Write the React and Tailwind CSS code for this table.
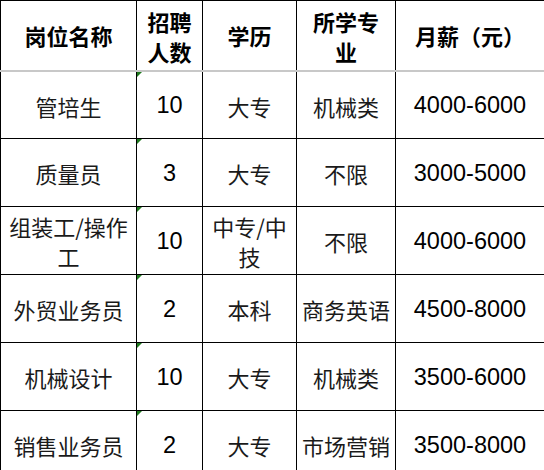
import React from 'react';

const cols = ['w-[136px]', 'w-[66px]', 'w-[94px]', 'w-[99px]', 'flex-1'];

const rows = [
  ['管培生', '10', '大专', '机械类', '4000-6000'],
  ['质量员', '3', '大专', '不限', '3000-5000'],
  [['组装工/操作', '工'], '10', ['中专/中', '技'], '不限', '4000-6000'],
  ['外贸业务员', '2', '本科', '商务英语', '4500-8000'],
  ['机械设计', '10', '大专', '机械类', '3500-6000'],
  ['销售业务员', '2', '大专', '市场营销', '3500-8000'],
];

const cjk = "font-['Noto_Sans_CJK_SC',sans-serif]";
const num = "font-['Liberation_Sans','Noto_Sans_CJK_SC',sans-serif]";

const Text = ({ value }) =>
  Array.isArray(value) ? (
    <span className="leading-[30px]">
      {value[0]}
      <br />
      {value[1]}
    </span>
  ) : (
    <span className="pt-[2px]">{value}</span>
  );

const App = () => {
  return (
    <div className="w-[544px] h-[470px] overflow-hidden bg-white text-black">
      {/* Header */}
      <div className="flex h-[72px] border-t border-black border-b-2 border-b-[#c8c8c8]">
        {['岗位名称', ['招聘', '人数'], '学历', ['所学专', '业'], '月薪（元）'].map((h, i) => (
          <div
            key={i}
            className={`${cols[i]} flex items-center justify-center border-l border-black text-center text-[22px] font-bold ${cjk}`}
          >
            {Array.isArray(h) ? (
              <span className="leading-[30px] pt-[1px]">
                {h[0]}
                <br />
                {h[1]}
              </span>
            ) : (
              h
            )}
          </div>
        ))}
      </div>

      {rows.map((r, ri) => (
        <div
          key={ri}
          className={`flex ${ri === 0 ? 'h-[67px]' : 'h-[68px]'} border-b border-black`}
        >
          {r.map((c, ci) => (
            <div
              key={ci}
              className={`${cols[ci]} relative flex items-center justify-center border-l border-black text-center ${
                ci === 1 || ci === 4 ? `${num} text-[23.5px]` : `${cjk} text-[22px] text-[#1a1a1a]`
              }`}
            >
              {ci === 1 && (
                <span className="absolute top-0 left-0 h-0 w-0 border-t-[5px] border-t-[#1f7a1f] border-r-[5px] border-r-transparent" />
              )}
              <Text value={c} />
            </div>
          ))}
        </div>
      ))}
    </div>
  );
};

export default App;
